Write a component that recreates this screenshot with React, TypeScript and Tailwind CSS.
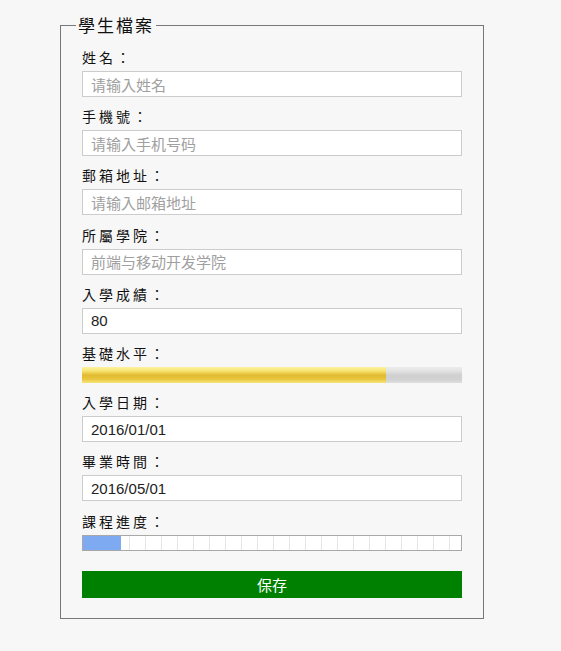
import React from 'react';

const labelCls = "h-5 leading-5 text-[14px] tracking-[3px] text-[#111]";
const inputCls = "block w-full h-[26px] border border-[#cccccc] bg-white px-[8px] text-[15px] text-[#222] placeholder:text-[#a0a0a0] outline-none";

const Field: React.FC<{ label: string; children: React.ReactNode }> = ({ label, children }) => (
    <div className="mb-[9.2px]">
        <div className={labelCls}>{label}：</div>
        <div className="mt-[4px]">{children}</div>
    </div>
);

export default function App() {
    return (
        <div className="min-h-[651px] bg-[#f7f7f7] pt-[13px] font-['Noto_Sans_CJK_TC','Liberation_Sans',sans-serif]">
            <fieldset className="ml-[60px] w-[424px] h-[606px] border border-[#777777] p-0 m-0">
                <legend className="ml-[15px] px-[2px] h-6 leading-6 text-[17px] tracking-[2px] text-[#111]">學生檔案</legend>
                <div className="px-[21px] pt-[10px]">
                    <Field label="姓名">
                        <input className={inputCls} placeholder="请输入姓名" />
                    </Field>
                    <Field label="手機號">
                        <input className={inputCls} placeholder="请输入手机号码" />
                    </Field>
                    <Field label="郵箱地址">
                        <input className={inputCls} placeholder="请输入邮箱地址" />
                    </Field>
                    <Field label="所屬學院">
                        <input className={inputCls} placeholder="前端与移动开发学院" />
                    </Field>
                    <Field label="入學成績">
                        <input className={`${inputCls} font-['Liberation_Sans',sans-serif]`} defaultValue="80" />
                    </Field>
                    <Field label="基礎水平">
                        <div className="h-4 w-full bg-[linear-gradient(to_bottom,#ececec,#e2e2e2_25%,#d0d0d0_50%,#d2d2d2_80%,#e0e0e0)]">
                            <div className="h-full w-[80%] bg-[linear-gradient(to_bottom,#fdf3a0,#f6e370_25%,#e2bb32_50%,#e6c43c_75%,#f8e67a)]" />
                        </div>
                    </Field>
                    <Field label="入學日期">
                        <input className={`${inputCls} font-['Liberation_Sans',sans-serif] text-[14.5px]`} defaultValue="2016/01/01" />
                    </Field>
                    <Field label="畢業時間">
                        <input className={`${inputCls} font-['Liberation_Sans',sans-serif] text-[14.5px]`} defaultValue="2016/05/01" />
                    </Field>
                    <div>
                        <div className={labelCls}>課程進度：</div>
                        <div className="mt-[4px] h-4 w-full border border-[#a8a8a8] bg-white bg-[repeating-linear-gradient(to_right,transparent_0,transparent_14px,#e6e6e6_14px,#e6e6e6_15px,transparent_15px,transparent_16px)]">
                            <div className="h-full w-[10%] bg-[#7eaaf2]" />
                        </div>
                    </div>
                    <button className="mt-[20px] block w-full h-[27px] bg-[#008000] text-white text-[15px] leading-[27px]">保存</button>
                </div>
            </fieldset>
        </div>
    );
}
